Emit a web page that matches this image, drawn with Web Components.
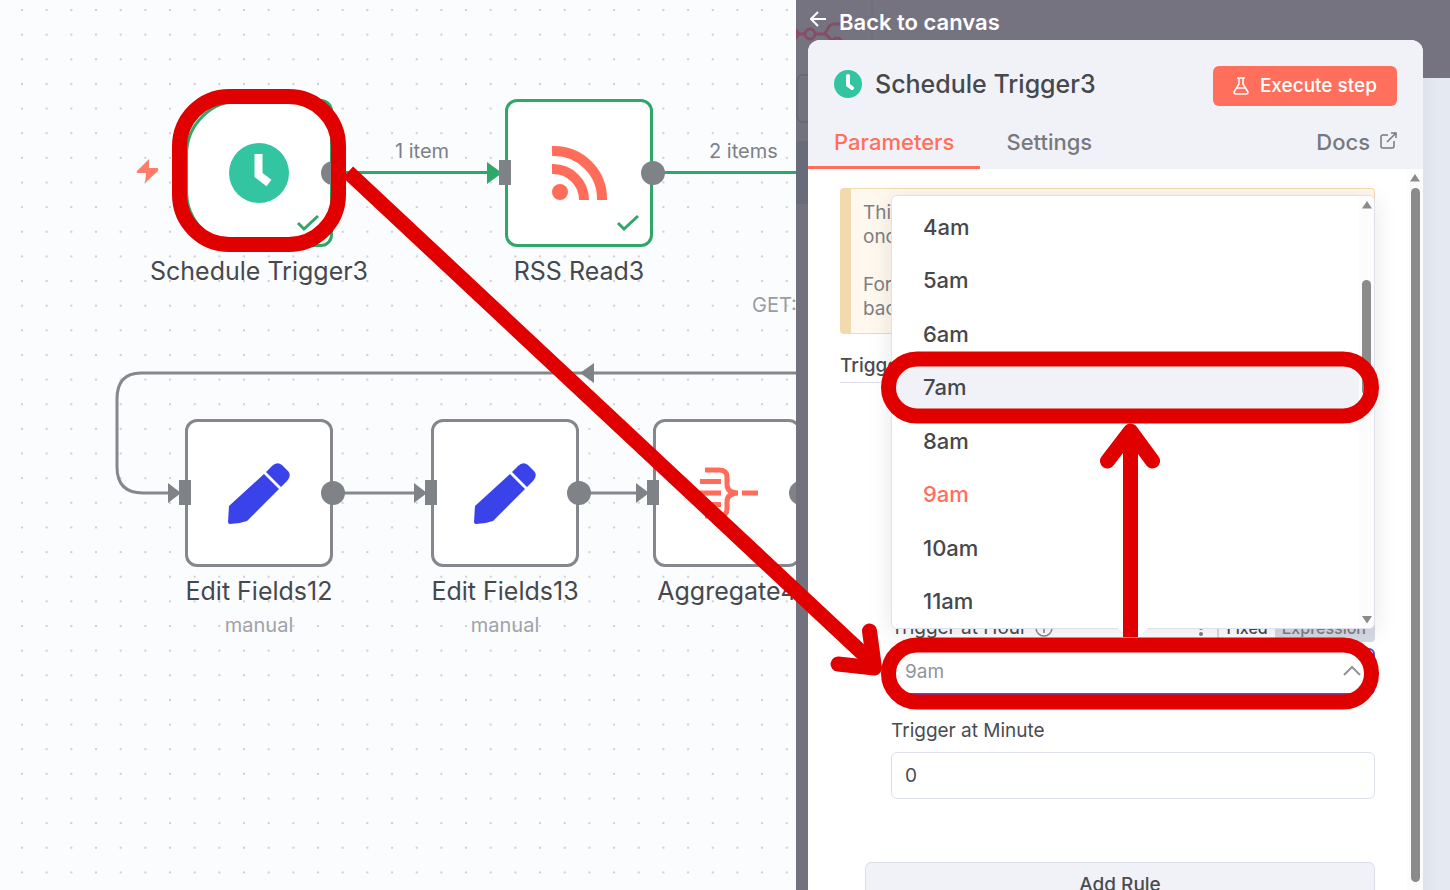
<!DOCTYPE html>
<html lang="en">
<head>
<meta charset="utf-8">
<title>Schedule Trigger3</title>
<style>
    html, body {
        height: 100%;
        margin: 0;
    }
    body {
        font-family: Inter, "Liberation Sans", sans-serif;
        overflow: hidden;
    }
</style>
</head>
<body>

<template id="workflow-app">
    <style>
        :host {
            position: relative;
            display: grid;
            grid-template-columns: 796fr 654fr;
            height: 100%;
            overflow: hidden;
        }
    </style>
    <flow-canvas></flow-canvas>
    <detail-view></detail-view>
    <guide-marks></guide-marks>
</template>

<template id="flow-canvas">
    <style>
        :host {
            position: relative;
            display: block;
            overflow: hidden;
            background: #fbfcfe;
            color: #7d8087;
        }
        .edges {
            position: absolute;
            inset: 0;
            width: 100%;
            height: 100%;
        }
        flow-node, .tag {
            position: absolute;
        }
        .tag {
            font-size: 20px;
            line-height: 24px;
            white-space: nowrap;
        }
        .light { color: #9a9ca3; }
    </style>
    <svg class="edges" aria-hidden="true">
        <defs>
            <pattern id="dots" x="21" y="9" width="24.67" height="24.64" patternUnits="userSpaceOnUse">
                <rect width="2" height="2" fill="#cdcfd4"/>
            </pattern>
        </defs>
        <rect width="100%" height="100%" fill="url(#dots)"/>
        <g fill="none" stroke="#2fa768" stroke-width="3">
            <path d="M340 172.500H490M660 172.500H900"/>
        </g>
        <path d="M487 162l15 11-15 11z" fill="#2fa768"/>
        <g fill="none" stroke="#85878d" stroke-width="3">
            <path d="M900 373H141Q117 373 117 399V467Q117 493 143 493H170"/>
            <path d="M340 493H418M588 493H640"/>
        </g>
        <path d="M594 363v20l-14-10z" fill="#7f8287"/>
        <path d="M149 159L137 171Q136 173 138 173H146L145 183 158 171Q159 168 157 168H149z" fill="#ff7b6c"/>
    </svg>
    <span class="tag" style="left:395px;top:139px">1 item</span>
    <span class="tag" style="left:709px;top:139px">2 items</span>
    <span class="tag light" style="left:752px;top:293px">GET:</span>

    <flow-node class="trigger done" style="left:185px;top:99px">
        <svg slot="icon" width="60" height="60" viewBox="0 0 60 60"><circle cx="30" cy="30" r="30" fill="#33c5a1"/><path d="M29.500 11V32L40 40" fill="none" stroke="#fff" stroke-width="8"/></svg>
        Schedule Trigger3
    </flow-node>
    <flow-node class="done input" style="left:505px;top:99px">
        <svg slot="icon" width="60" height="60" viewBox="0 0 60 60"><g fill="none" stroke="#ff6d5a" stroke-width="10"><path d="M3 8A48 48 0 0 1 53 57M3 26A31 31 0 0 1 35 57"/></g><circle cx="11" cy="49" r="8" fill="#ff6d5a"/></svg>
        RSS Read3
    </flow-node>
    <flow-node class="input" style="left:185px;top:419px">
        <svg slot="icon" width="64" height="64" viewBox="0 0 64 64"><path d="M37 13L52 28 20 60Q12 63 3 63 1 63 1 61L2 45ZM39 11L45 5Q50 0 55 4L61 10Q65 14 60 20L54 26Z" fill="#3a42e9"/></svg>
        Edit Fields12
        <span slot="note">manual</span>
    </flow-node>
    <flow-node class="input" style="left:431px;top:419px">
        <svg slot="icon" width="64" height="64" viewBox="0 0 64 64"><path d="M37 13L52 28 20 60Q12 63 3 63 1 63 1 61L2 45ZM39 11L45 5Q50 0 55 4L61 10Q65 14 60 20L54 26Z" fill="#3a42e9"/></svg>
        Edit Fields13
        <span slot="note">manual</span>
    </flow-node>
    <flow-node class="input" style="left:653px;top:419px">
        <svg slot="icon" width="62" height="60" viewBox="0 0 62 60"><g fill="none" stroke="#ff6d5a" stroke-width="5"><path d="M9 7H23Q31 7 31 14V21Q31 30 42 30Q31 30 31 39V46Q31 53 23 53H9M4 18.500H25M4 30H25M4 41.500H25M46 30H62"/></g></svg>
        Aggregate4
    </flow-node>
</template>

<template id="flow-node">
    <style>
        :host {
            --line: #85878d;
            display: flex;
            flex-direction: column;
            align-items: center;
            width: 148px;
            color: #46484d;
            font-size: 25px;
            line-height: 32px;
            white-space: nowrap;
        }
        :host(.done) { --line: #2fa768; }
        .box {
            position: relative;
            box-sizing: border-box;
            display: flex;
            align-items: center;
            justify-content: center;
            width: 148px;
            height: 148px;
            margin-bottom: 8px;
            border: 3px solid var(--line);
            border-radius: 12px;
            background: #fff;
        }
        :host(.trigger) .box { border-radius: 56px 12px 12px 56px; }
        .port {
            position: absolute;
            background: #7f8287;
        }
        .out {
            right: -15px;
            top: 59px;
            width: 24px;
            height: 24px;
            border-radius: 50%;
        }
        .in {
            display: none;
            left: -9px;
            top: 58px;
            width: 12px;
            height: 25px;
        }
        .tip {
            display: none;
            position: absolute;
            left: -20px;
            top: 61px;
        }
        .check {
            display: none;
            position: absolute;
            right: 10px;
            bottom: 12px;
        }
        :host(.input) .in, :host(.done) .check { display: block; }
        :host(.input:not(.done)) .tip { display: block; }
        .note {
            margin-top: 2px;
            color: #a0a2aa;
            font-size: 20px;
        }
    </style>
    <div class="box">
        <slot name="icon"></slot>
        <svg class="tip" width="14" height="20"><path d="M0 0L13 10 0 20z" fill="#7f8287"/></svg>
        <span class="port in"></span>
        <span class="port out"></span>
        <svg class="check" width="24" height="18" viewBox="0 0 24 18"><path d="M2 9l6 6L22 2" fill="none" stroke="#2fa768" stroke-width="3"/></svg>
    </div>
    <slot></slot>
    <div class="note"><slot name="note"></slot></div>
</template>

<template id="detail-view">
    <style>
        :host {
            position: relative;
            display: flex;
            flex-direction: column;
            min-width: 0;
            overflow: hidden;
            background: linear-gradient(#767380 78px, transparent 78px), linear-gradient(90deg, #74717e 50%, #dfe3ec 96%, #e5e9f2 98%);
        }
        .behind {
            position: absolute;
            left: 0;
            top: 0;
        }
        .back {
            position: relative;
            align-self: flex-start;
            display: flex;
            align-items: flex-start;
            gap: 12px;
            margin-left: 14px;
            padding: 7px 0 0;
            height: 40px;
            box-sizing: border-box;
            border: 0;
            background: none;
            color: #fff;
            font: 600 22px/30px Inter, "Liberation Sans", sans-serif;
        }
        .back svg { margin-top: 4px; }
        .panel {
            position: relative;
            flex: 1;
            min-height: 0;
            display: flex;
            flex-direction: column;
            margin: 0 27px 0 12px;
            border-radius: 12px 12px 0 0;
            overflow: hidden;
            background: #fff;
        }
        header {
            background: #f1f2f8;
            color: #46484b;
        }
        .title {
            display: flex;
            align-items: flex-start;
            gap: 13px;
            padding: 26px 26px 0;
        }
        .title > svg { margin-top: 4px; }
        h1 {
            flex: 1;
            margin: 0;
            font-size: 25px;
            font-weight: 500;
            line-height: 36px;
        }
        .run {
            display: flex;
            align-items: center;
            justify-content: center;
            gap: 11px;
            height: 40px;
            padding: 0 20px;
            border: 0;
            border-radius: 6px;
            background: #ff6f5c;
            color: #fff;
            font: 500 19px/24px Inter, "Liberation Sans", sans-serif;
        }
        nav {
            display: flex;
            margin-top: 10px;
            font-size: 22px;
            font-weight: 500;
            line-height: 30px;
        }
        nav a {
            box-sizing: border-box;
            height: 53px;
            padding: 11px 26px 0;
            color: #77797e;
            text-decoration: none;
        }
        nav .on {
            color: #ff6f5c;
            border-bottom: 3px solid #ff6f5c;
        }
        nav .docs {
            display: flex;
            gap: 10px;
            margin-left: auto;
        }
        .docs svg { margin-top: 5px; }
        .scroll {
            flex: 1;
            min-height: 0;
            display: flex;
            overflow: hidden;
        }
        form {
            flex: 1;
            min-width: 0;
            padding: 19px 32px 0;
            color: #4a4c50;
            font-size: 19px;
            line-height: 24px;
        }
        .notice {
            margin: 0;
            padding: 12px;
            border: 1px solid #f3d9ae;
            border-left-width: 11px;
            border-radius: 4px;
            background: #fef8ee;
            color: #7d7f85;
        }
        .section {
            margin: 20px 0 0;
            padding-bottom: 4px;
            border-bottom: 1px solid #dfe1ec;
            font-size: 19px;
            font-weight: 500;
        }
        .rule {
            position: relative;
            margin: 231px 0 0 51px;
        }
        .row {
            display: flex;
            align-items: center;
            gap: 8px;
            height: 28px;
        }
        .more { margin-left: auto; }
        .modes {
            display: flex;
            align-items: center;
            height: 28px;
            margin-left: 6px;
            padding: 0 2px;
            border-radius: 4px;
            background: #d8dbe6;
        }
        .modes button {
            height: 24px;
            padding: 0 7px;
            border: 0;
            border-radius: 4px;
            background: none;
            color: #7d7f85;
            font: 500 16px/24px Inter, "Liberation Sans", sans-serif;
        }
        .modes .on { background: #fff; color: #46484b; }
        .pick { position: relative; margin-top: 6px; }
        .pick svg { position: absolute; right: 14px; top: 17px; }
        select, input {
            display: block;
            box-sizing: border-box;
            width: 100%;
            height: 47px;
            padding: 0 13px;
            border: 1px solid #dadfe9;
            border-radius: 6px;
            background: #fff;
            color: #4a4c50;
            font: 400 19px/24px Inter, "Liberation Sans", sans-serif;
            appearance: none;
        }
        select { border: 2px solid #5a45d6; padding: 0 12px; color: #92949b; }
        .minute { display: block; margin: 24px 0 9px; }
        .add {
            display: block;
            width: calc(100% - 25px);
            height: 46px;
            margin: 63px 0 0 25px;
            border: 1px solid #dadfe9;
            border-radius: 6px;
            background: #f1f2f8;
            color: #4a4c50;
            font: 500 19px/24px Inter, "Liberation Sans", sans-serif;
        }
        .pop {
            position: absolute;
            left: 0;
            right: 0;
            bottom: 170px;
        }
        .pop svg {
            position: absolute;
            left: calc(50% - 15px);
            top: calc(100% - 1px);
        }
        scroll-bar { width: 16px; }
    </style>
    <svg class="behind" width="80" height="300" aria-hidden="true">
        <path d="M0 141h12v63H0z" fill="#686b7a"/>
        <path d="M76 0v40" stroke="#6d6a79"/>
        <g fill="none" stroke="#864d66" stroke-width="3">
            <path d="M0 34H8M20 34H26C33 34 30 24 38 24H46M28 34C33 34 32 41 40 41"/>
            <circle cx="14" cy="34" r="5"/><circle cx="50" cy="24" r="5"/><circle cx="41" cy="43" r="5"/><circle cx="-3" cy="34" r="5"/>
        </g>
        <rect x="1" y="75" width="30" height="47" rx="6" fill="none" stroke="#625f6d"/>
    </svg>
    <button class="back">
        <svg width="17" height="17" viewBox="0 0 17 17"><path d="M16 8H2M8 1L1 8l7 7" fill="none" stroke="#fff" stroke-width="2"/></svg>
        Back to canvas
    </button>
    <div class="panel">
        <header>
            <div class="title">
                <svg width="28" height="28" viewBox="0 0 28 28"><circle cx="14" cy="14" r="14" fill="#33c5a1"/><path d="M14 6V15L18 18" fill="none" stroke="#fff" stroke-width="4" stroke-linecap="round"/></svg>
                <h1>Schedule Trigger3</h1>
                <button class="run">
                    <svg width="16" height="18" viewBox="0 0 16 18" fill="none" stroke="#fff" stroke-width="1.500"><path d="M4 1h8M6 1V7L1 15Q1 17 3 17H13Q15 17 15 15L10 7V1M4 11H12"/></svg>
                    Execute step
                </button>
            </div>
            <nav>
                <a class="on" href="#parameters">Parameters</a>
                <a href="#settings">Settings</a>
                <a class="docs" href="#docs">Docs
                    <svg width="17" height="17" viewBox="0 0 17 17" fill="none" stroke="#77797e" stroke-width="1.500"><path d="M8 3H3Q1 3 1 5V14Q1 16 3 16H12Q14 16 14 14V9M11 1H16V6M16 1L7 10"/></svg>
                </a>
            </nav>
        </header>
        <div class="scroll">
            <form>
                <p class="notice">This<br>once<br><br>For<br>back</p>
                <h2 class="section">Trigger Rules</h2>
                <div class="rule">
                    <div class="row">
                        <label for="hour">Trigger at Hour</label>
                        <svg width="18" height="18" viewBox="0 0 18 18" fill="none" stroke="#85878d" stroke-width="1.500"><circle cx="9" cy="9" r="8"/><path d="M9 8v6M9 4v2"/></svg>
                        <svg class="more" width="4" height="20" fill="#7d7f85"><circle cx="2" cy="4" r="2"/><circle cx="2" cy="10" r="2"/><circle cx="2" cy="16" r="2"/></svg>
                        <div class="modes">
                            <button type="button" class="on">Fixed</button>
                            <button type="button">Expression</button>
                        </div>
                    </div>
                    <div class="pick">
                        <select id="hour"><option>9am</option></select>
                        <svg width="18" height="12" viewBox="0 0 18 12"><path d="M1 10L9 2l8 8" fill="none" stroke="#92949b" stroke-width="2"/></svg>
                    </div>
                    <label class="minute" for="minute">Trigger at Minute</label>
                    <input id="minute" value="0">
                    <div class="pop">
                        <hour-menu></hour-menu>
                        <svg width="30" height="14"><path d="M0 0L15 14 30 0z" fill="#fff"/></svg>
                    </div>
                </div>
                <button type="button" class="add">Add Rule</button>
            </form>
            <scroll-bar class="long" style="--from:8px;--size:694px"></scroll-bar>
        </div>
    </div>
</template>

<template id="hour-menu">
    <style>
        :host {
            box-sizing: border-box;
            display: flex;
            height: 434px;
            border: 1px solid #dfe2ec;
            border-radius: 6px;
            overflow: hidden;
            background: #fff;
            box-shadow: 0 4px 24px rgba(0, 0, 0, .1);
        }
        ul {
            flex: 1;
            display: grid;
            grid-auto-rows: 1fr;
            margin: 0;
            padding: 4px 0 0;
            list-style: none;
            color: #46484b;
            font-size: 22px;
            font-weight: 500;
        }
        li {
            display: flex;
            align-items: center;
            padding-left: 31px;
        }
        .hover { background: #f1f2f8; }
        .current { color: #ff6f5c; }
        scroll-bar { width: 15px; }
    </style>
    <ul role="listbox" aria-label="Hour"></ul>
    <scroll-bar style="--from:73px;--size:115px"></scroll-bar>
</template>

<template id="scroll-bar">
    <style>
        :host {
            display: flex;
            flex-direction: column;
            align-items: center;
            background: #fcfcfc;
        }
        svg { flex: none; margin-top: 5px; }
        i {
            flex: none;
            width: 9px;
            height: var(--size);
            margin-top: calc(var(--from) - 2px);
            border-radius: 5px;
            background: #8b8b8b;
        }
        .down { margin-top: auto; margin-bottom: 4px; }
        :host(.long) .down { display: none; }
    </style>
    <svg width="10" height="8"><path d="M0 7.500L5 0l5 7.500z" fill="#8b8b8b"/></svg>
    <i></i>
    <svg class="down" width="10" height="8"><path d="M0 0L5 7.500 10 0z" fill="#8b8b8b"/></svg>
</template>

<template id="guide-marks">
    <style>
        :host {
            position: absolute;
            inset: 0;
            pointer-events: none;
        }
        svg { width: 100%; height: 100%; }
    </style>
    <svg fill="none" stroke="#e10000" stroke-width="15" aria-hidden="true">
        <rect x="179.500" y="96.500" width="159" height="148" rx="50"/>
        <rect x="888.500" y="359" width="483" height="57" rx="28.500"/>
        <rect x="888.500" y="645" width="483" height="57" rx="28.500"/>
        <path d="M348 172L874 664M1130.500 637V436"/>
        <path d="M869.500 631L874.500 668 838 664M1107.500 461L1130.500 431 1152.500 461" stroke-linecap="round" stroke-linejoin="round"/>
    </svg>
</template>

<workflow-app></workflow-app>

<script>
    // clones the template that has the same id as the tag
    class TemplateElement extends HTMLElement {
        constructor(){
            super()
            const template = document.getElementById(this.localName)
            this.attachShadow({ mode : "open" }).appendChild(template.content.cloneNode(true))
        }
    }

    class HourMenu extends TemplateElement {
        connectedCallback(){
            const hours = ['4am', '5am', '6am', '7am', '8am', '9am', '10am', '11am']
            this.shadowRoot.querySelector('ul').innerHTML = hours.map(hour => {
                const state = hour === '7am' ? 'hover' : hour === '9am' ? 'current' : ''
                return `<li role="option" class="${state}" aria-selected="${hour === '9am'}">${hour}</li>`
            }).join('')
        }
    }

    customElements.define('scroll-bar', class extends TemplateElement {})
    customElements.define('hour-menu', HourMenu)
    customElements.define('flow-node', class extends TemplateElement {})
    customElements.define('flow-canvas', class extends TemplateElement {})
    customElements.define('detail-view', class extends TemplateElement {})
    customElements.define('guide-marks', class extends TemplateElement {})
    customElements.define('workflow-app', class extends TemplateElement {})
</script>
</body>
</html>
